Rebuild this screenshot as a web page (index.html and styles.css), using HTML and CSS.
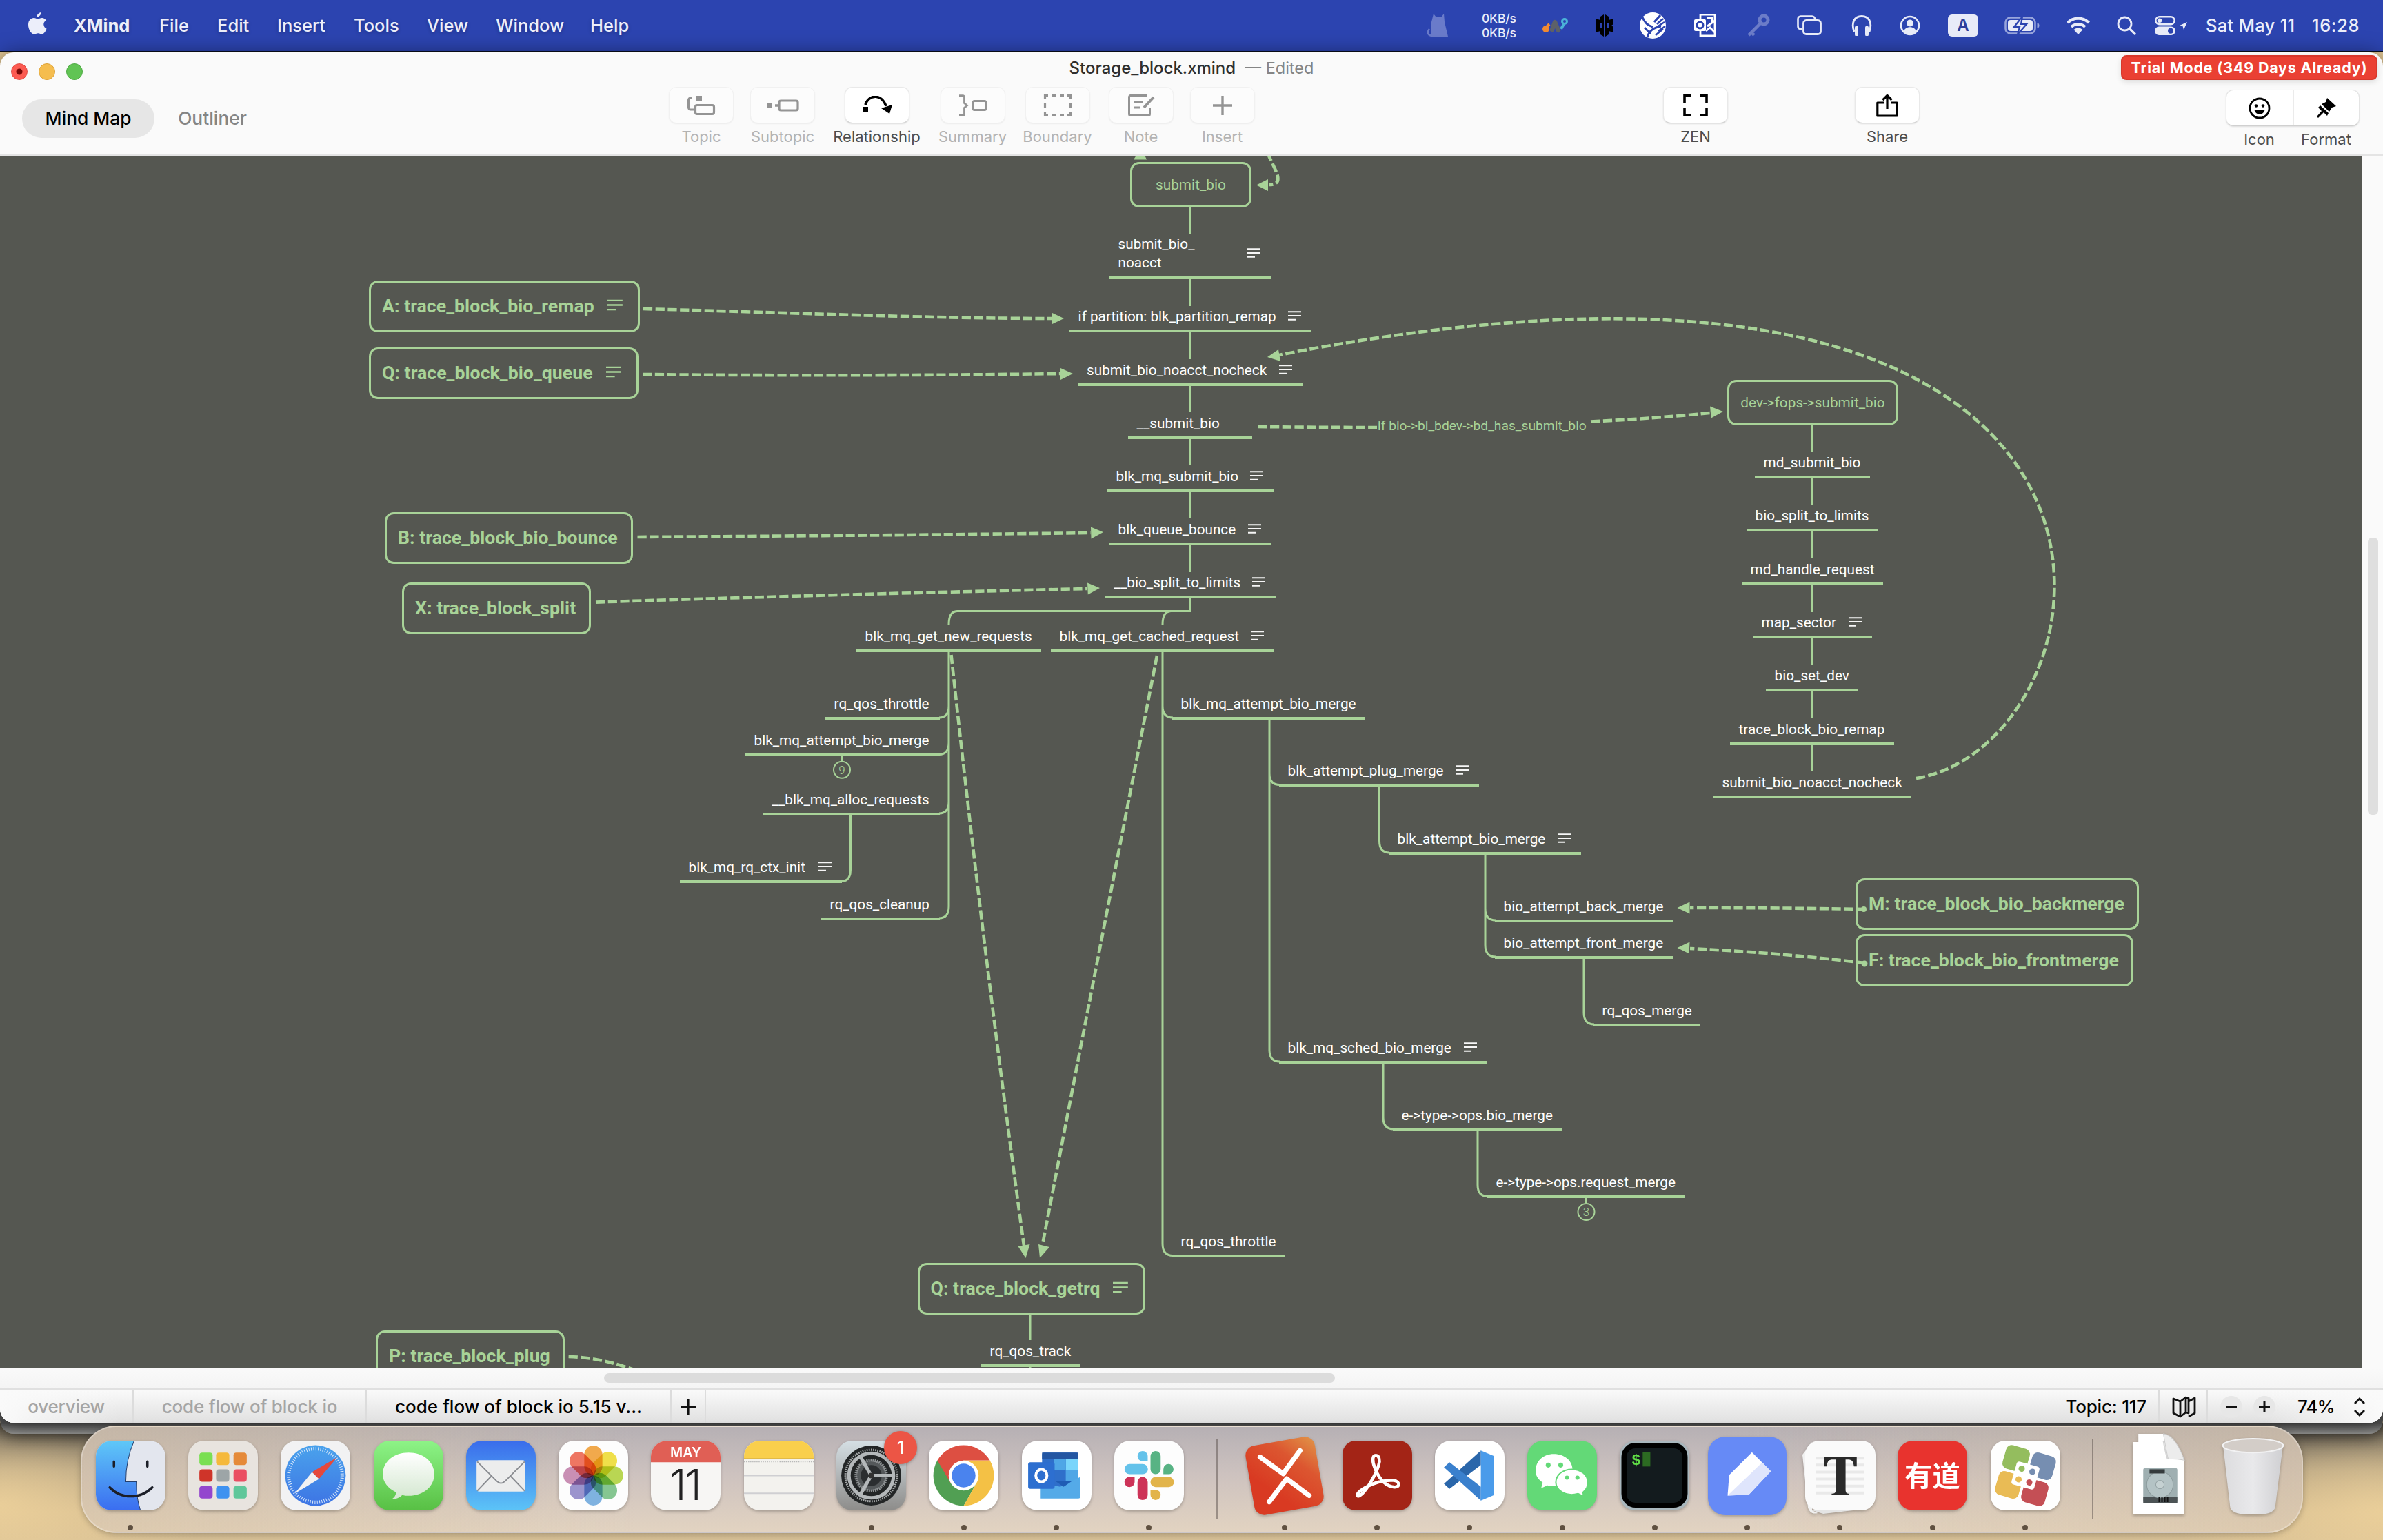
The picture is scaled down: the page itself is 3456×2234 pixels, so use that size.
FILE: index.html
```html
<!DOCTYPE html>
<html lang="en">
<head>
<meta charset="utf-8">
<title>Storage_block.xmind</title>
<link rel="stylesheet" href="styles.css">
</head>
<body>
<svg class="sprite" aria-hidden="true">
  <symbol id="note" viewBox="0 0 20 14"><path d="M0 1.2H19M0 7H19M0 12.8H11" fill="none" stroke="currentColor" stroke-width="2"/></symbol>
</svg>

<header class="menubar">
  <nav class="menus">
    <svg class="apple" width="28" height="33" viewBox="0 0 28 33"><path d="M19.5 0c.2 3-2.600 6.600-6 6.600C13.200 3.600 16.300.4 19.500 0zM26.800 11.400c-2.500 1.500-3.600 3.500-3.500 6 .1 3 1.700 5 4.200 6.100-1 3.300-3.700 8-6.700 8-2 0-2.900-1.300-5.600-1.300s-3.700 1.300-5.600 1.300C5.500 31.500 1 25 1 17.700 1 11.500 5 8 9.100 8c2.300 0 4.200 1.500 5.700 1.500S18.600 7.900 21 7.900c2.200 0 4.500 1.200 5.800 3.500z" fill="#eceefa"/></svg>
    <b>XMind</b><span>File</span><span>Edit</span><span>Insert</span><span>Tools</span><span>View</span><span>Window</span><span>Help</span>
  </nav>
  <div class="status">
    <svg width="34" height="34" viewBox="0 0 34 34" opacity=".38"><path d="M9 0l4 5h7l4-5 1 12 5 21H6V12z" fill="#cfd6f5"/><path d="M6 32C1 31-1 27 3 22" fill="none" stroke="#cfd6f5" stroke-width="2.500"/></svg>
    <div class="net"><span>0KB/s</span><span>0KB/s</span></div>
    <svg width="38" height="22" viewBox="0 0 38 22"><path d="M14 17L18 6l5 12" fill="none" stroke="#5d6168" stroke-width="6.500" stroke-linecap="round" stroke-linejoin="round"/><circle cx="5" cy="16" r="5" fill="#f08a33"/><path d="M6 13l4-4" stroke="#f08a33" stroke-width="4"/><circle cx="32" cy="5" r="3.500" fill="none" stroke="#4bb3d8" stroke-width="3"/><path d="M31 9l-4 7" stroke="#4bb3d8" stroke-width="4"/></svg>
    <svg width="28" height="32" viewBox="0 0 28 32"><path d="M13 0v32L8 29V24L1 26V6l7 2V3zM15 0l5 3v5l7-2v8l-3 2 3 2v8l-7-2v5l-5 3z" fill="#000"/><path d="M9 13v6M19 12v8" stroke="#2c44b0" stroke-width="2"/></svg>
    <svg width="40" height="38" viewBox="0 0 40 38"><circle cx="20" cy="19" r="19" fill="#fff"/><path d="M5 7c4 9 8 12 15 14M12 36c2-8 8-14 20-16M8 22l9 9M22 14L31 4M26 17l9-8" fill="none" stroke="#2c44b0" stroke-width="3"/><path d="M26 21l11-7M28 27l10-7M24 33l11-9" stroke="#2c44b0" stroke-width="2.500"/></svg>
    <svg width="34" height="34" viewBox="0 0 34 34"><path d="M10 1h21v31H10v-7M10 8V1" fill="none" stroke="#fff" stroke-width="2.800"/><rect x="1" y="8" width="17" height="17" rx="2" fill="#fff"/><circle cx="9.500" cy="16.500" r="4.500" fill="none" stroke="#2c44b0" stroke-width="3"/><path d="M20 18l11-8M18 25l6-5 8 8M20 6h7v7" fill="none" stroke="#fff" stroke-width="2.800"/></svg>
    <svg width="34" height="34" viewBox="0 0 34 34" opacity=".3"><circle cx="25" cy="9" r="6" fill="none" stroke="#fff" stroke-width="5"/><path d="M20 14L3 31m4-4l4 4" stroke="#fff" stroke-width="4.500" fill="none"/></svg>
    <svg width="36" height="30" viewBox="0 0 36 30"><path d="M8 20H5a4 4 0 0 1-3.500-4V5.500a4 4 0 0 1 4-4H22a4 4 0 0 1 4 4V6" fill="none" stroke="#e8ebf8" stroke-width="2.600"/><rect x="9.500" y="7.500" width="25" height="20" rx="4" fill="none" stroke="#e8ebf8" stroke-width="2.800"/></svg>
    <svg width="30" height="30" viewBox="0 0 30 30"><path d="M4 24C-1 10 5 1.500 15 1.500S31 10 26 24" fill="none" stroke="#e8ebf8" stroke-width="2.800"/><path d="M7.500 18v10M22.500 18v10" stroke="#e8ebf8" stroke-width="5" stroke-linecap="round"/></svg>
    <svg width="30" height="30" viewBox="0 0 30 30"><circle cx="15" cy="15" r="13" fill="none" stroke="#e8ebf8" stroke-width="2.600"/><circle cx="15" cy="11.500" r="5" fill="#e8ebf8"/><path d="M6 24c1-9 17-9 18 0-5 4.500-13 4.500-18 0z" fill="#e8ebf8"/></svg>
    <div class="ime">A</div>
    <svg width="52" height="26" viewBox="0 0 52 26"><rect x="1.500" y="1.500" width="43" height="23" rx="7" fill="none" stroke="#98a5dc" stroke-width="2.500"/><rect x="5" y="5" width="36" height="16" rx="4" fill="#e8ebf8"/><path d="M47.500 9c4 1 4 7 0 8z" fill="#98a5dc"/><path d="M26 0L14 15h8l-3 11 13-15h-8z" fill="#e8ebf8" stroke="#2c44b0" stroke-width="2.200"/></svg>
    <svg width="36" height="28" viewBox="0 0 36 28"><path d="M2.500 10a22 22 0 0 1 31 0M8 16a14.500 14.500 0 0 1 20 0" fill="none" stroke="#e8ebf8" stroke-width="4.200"/><path d="M11.500 20a9.500 9.500 0 0 1 13 0L18 27z" fill="#e8ebf8"/></svg>
    <svg width="28" height="28" viewBox="0 0 28 28"><circle cx="11.500" cy="11.500" r="9.500" fill="none" stroke="#e8ebf8" stroke-width="2.800"/><path d="M18.500 18.500l7.500 7.500" stroke="#e8ebf8" stroke-width="3.400" stroke-linecap="round"/></svg>
    <svg width="48" height="28" viewBox="0 0 48 28"><rect x="1.300" y="1.300" width="27.400" height="11" rx="5.500" fill="none" stroke="#e8ebf8" stroke-width="2.500"/><circle cx="7" cy="6.800" r="3.200" fill="#e8ebf8"/><rect x="0" y="15.500" width="30" height="12.500" rx="6.200" fill="#e8ebf8"/><circle cx="23" cy="21.700" r="4" fill="#2c44b0"/><path d="M47 9l-5 11-1.500-5-4.500-1z" fill="#e8ebf8"/></svg>
    <span class="date">Sat May 11</span><span class="time">16:28</span>
  </div>
</header>

<main class="window">
  <div class="titlebar">
    <div class="lights"><i class="close"></i><i class="min"></i><i class="max"></i></div>
    <h1>Storage_block.xmind <small>— Edited</small></h1>
    <div class="trial">Trial Mode (349 Days Already)</div>
  </div>
  <div class="toolbar">
    <div class="modes"><span class="mode on">Mind Map</span><span class="mode">Outliner</span></div>
    <div class="tool off"><div class="btn"><svg width="42" height="30" viewBox="0 0 42 30"><path d="M8 4H5.500a3 3 0 0 0-3 3v11a3 3 0 0 0 3 3H11" fill="none" stroke="currentColor" stroke-width="3"/><rect x="13" y="1" width="9" height="7" fill="currentColor"/><rect x="12.500" y="14.500" width="27" height="13" rx="2.500" fill="none" stroke="currentColor" stroke-width="3.200"/></svg></div><span>Topic</span></div>
    <div class="tool off"><div class="btn"><svg width="48" height="20" viewBox="0 0 48 20"><rect x="1" y="6" width="8" height="8" fill="currentColor"/><path d="M13 10h5" stroke="currentColor" stroke-width="3.500"/><rect x="19" y="3" width="27" height="14" rx="2.500" fill="none" stroke="currentColor" stroke-width="3.200"/></svg></div><span>Subtopic</span></div>
    <div class="tool"><div class="btn"><svg width="44" height="28" viewBox="0 0 44 28"><path d="M5 13C9-2 29-4 35 15" fill="none" stroke="#000" stroke-width="3.600"/><rect x="1" y="16" width="8" height="8" fill="#000"/><path d="M28 18l16-5-4 13z" fill="#000"/></svg></div><span>Relationship</span></div>
    <div class="tool off"><div class="btn"><svg width="42" height="32" viewBox="0 0 42 32"><path d="M1 1.600h5.500a2 2 0 0 1 2 2v9l4 3.400-4 3.400v9a2 2 0 0 1-2 2H1" fill="none" stroke="currentColor" stroke-width="2.800"/><rect x="21" y="9.500" width="19" height="13" rx="2.500" fill="none" stroke="currentColor" stroke-width="3.200"/></svg></div><span>Summary</span></div>
    <div class="tool off"><div class="btn"><svg width="42" height="32" viewBox="0 0 42 32"><path d="M2.500 7V1.600H7M13 1.600h6M24 1.600h6M35 1.600h4.500V7M39.500 12v8M39.500 25v5.400H35M30 30.400h-6M19 30.400h-6M7 30.400H2.500V25M2.500 20v-8" fill="none" stroke="currentColor" stroke-width="3.200"/></svg></div><span>Boundary</span></div>
    <div class="tool off"><div class="btn"><svg width="40" height="34" viewBox="0 0 40 34"><path d="M29 2.600H4.500a2 2 0 0 0-2 2v25a2 2 0 0 0 2 2h26a2 2 0 0 0 2-2V21M9 12h14M9 20h9" fill="none" stroke="currentColor" stroke-width="3"/><path d="M38 5L24 20" stroke="currentColor" stroke-width="4"/></svg></div><span>Note</span></div>
    <div class="tool off"><div class="btn"><svg width="30" height="28" viewBox="0 0 30 28"><path d="M15 0v28M1 14h28" stroke="currentColor" stroke-width="3.400"/></svg></div><span>Insert</span></div>
    <i></i>
    <div class="tool"><div class="btn"><svg width="36" height="32" viewBox="0 0 36 32"><path d="M12 1.800H2V12M24 1.800h10V12M34 20v10.200H24M12 30.200H2V20" fill="none" stroke="#000" stroke-width="3.600"/></svg></div><span>ZEN</span></div>
    <i></i>
    <div class="tool"><div class="btn"><svg width="34" height="34" viewBox="0 0 34 34"><path d="M12 13H2.800v19h28.400V13H22M17 22V4M10.500 9L17 2.500 23.500 9" fill="none" stroke="#000" stroke-width="3.200" stroke-linejoin="round"/></svg></div><span>Share</span></div>
    <i></i>
    <div class="panels">
      <div class="seg">
        <div><svg width="32" height="32" viewBox="0 0 32 32"><circle cx="16" cy="16" r="14" fill="none" stroke="#000" stroke-width="2.800"/><circle cx="11" cy="12.500" r="2.200"/><circle cx="21" cy="12.500" r="2.200"/><path d="M8.500 18h15c-1 9-14 9-15 0z"/></svg></div>
        <div><svg width="32" height="32" viewBox="0 0 32 32"><path d="M17 1l13 12-6 2-4 6L9 10l6-3zM7 12l12 11-2 4-5-5-8 8-2-2 7-8-5-5z"/></svg></div>
      </div>
      <div class="seglabels"><span>Icon</span><span>Format</span></div>
    </div>
  </div>

  <div class="workspace">
    <section class="canvas">
      <svg class="wires" width="3426" height="1758" viewBox="0 226 3426 1758">
        <g class="branch">
          <path d="M1726 301V340M1726 403V444M1726 480V521M1726 558V598M1726 635V675M1726 712V752M1726 789V830M1726 867V886.500H1388Q1376 887 1376 906M1726 886.500H1698Q1686 887 1686 906"/>
          <path d="M1376 944V1024Q1376 1041 1362 1041M1376 1077Q1376 1094.500 1362 1094.500M1376 1163Q1376 1180 1362 1180M1376 1000V1315Q1376 1332 1362 1332M1233.500 1181V1262Q1233.500 1278.500 1220 1278.500M1221 1096V1104"/>
          <path d="M1686 944V1024Q1686 1041 1701 1041M1686 1000V1804Q1686 1821.500 1701 1821.500M1841 1042V1122Q1841 1138.500 1856 1138.500M1841 1100V1523Q1841 1540 1856 1540M2000.500 1140V1220Q2000.500 1237 2015 1237M2154 1238V1318Q2154 1335 2169 1335M2154 1300V1371Q2154 1388 2169 1388M2297 1389V1469Q2297 1486 2312 1486M2006 1541V1621Q2006 1638 2021 1638M2143 1639V1719Q2143 1735.500 2158 1735.500M2300.500 1737V1745.500"/>
          <path d="M2628 617V656M2628 692V733M2628 770V810M2628 847V888M2628 924V965M2628 1002V1042M2628 1079V1119M1494 1906V1944M1494 1981V1990"/>
          <circle cx="1221" cy="1116.700" r="12"/><circle cx="2300.500" cy="1758" r="12"/>
        </g>
        <g class="relation">
          <path d="M933 448C1130 453 1340 462 1526 462"/>
          <path d="M932 543Q1240 546 1538 542"/>
          <path d="M924.500 779Q1260 777 1582 773"/>
          <path d="M864 873.600Q1220 862 1577 854"/>
          <path d="M1824 619Q1920 620 1997 620M2307 611.500Q2400 607 2480 599"/>
          <path d="M2779 1129C3080 1080 3222 248 1855 515"/>
          <path d="M1838 221C1848 246 1866 268 1840 268"/>
          <path d="M1379.500 950Q1426 1379 1485 1807M1678 951Q1594 1379 1512 1805"/>
          <path d="M2705 1319Q2580 1317 2451 1317M2705 1397Q2580 1382 2451 1376M824.600 1968C865 1969 895 1978 940 1994"/>
        </g>
        <g class="head">
          <path d="M1543 462l-18-8.500v17zM1556 542l-18-8v17zM1600 772l-18-7.500.5 17zM1595 853l-18-7.500.8 17zM2499 597l-19-7.500 1.600 17zM1838 518l16-11 3 17zM1822 268.500l17-8.500v17zM1487.500 1825l-11-17 17-3zM1508 1825l-2-20 16 4zM2432.500 1317l18-8.500v17zM2432.500 1375l18-8.500-.8 17zM1644 231.500h19l-8-17z"/>
          <circle cx="2703" cy="1319" r="4"/><circle cx="2704" cy="1398" r="4.500"/>
        </g>
      </svg>

      <div class="box plain" style="--x:1639;--y:235;--w:176;--h:66">submit_bio</div>
      <div class="box plain" style="--x:2505;--y:551;--w:248;--h:66">dev-&gt;fops-&gt;submit_bio</div>
      <div class="box" style="--x:535;--y:406.500;--w:392.500;--h:75.500">A: trace_block_bio_remap<svg><use href="#note"/></svg></div>
      <div class="box" style="--x:535;--y:503.500;--w:391;--h:75.500">Q: trace_block_bio_queue<svg><use href="#note"/></svg></div>
      <div class="box" style="--x:558;--y:742.500;--w:360;--h:75.500">B: trace_block_bio_bounce</div>
      <div class="box" style="--x:583;--y:844.500;--w:274;--h:75.500">X: trace_block_split</div>
      <div class="box" style="--x:2691;--y:1273.500;--w:411;--h:75.500">M: trace_block_bio_backmerge</div>
      <div class="box" style="--x:2691;--y:1355;--w:403;--h:75.500">F: trace_block_bio_frontmerge</div>
      <div class="box" style="--x:1330.500;--y:1831.500;--w:330;--h:75.500">Q: trace_block_getrq<svg><use href="#note"/></svg></div>
      <div class="box" style="--x:545;--y:1929.500;--w:274;--h:75.500">P: trace_block_plug</div>

      <div class="topic two" style="--x:1609;--y:402;--w:234"><span>submit_bio_<br>noacct</span><svg><use href="#note"/></svg></div>
      <div class="topic" style="--x:1551;--y:479.500;--w:351">if partition: blk_partition_remap<svg><use href="#note"/></svg></div>
      <div class="topic" style="--x:1563.500;--y:557;--w:325.500">submit_bio_noacct_nocheck<svg><use href="#note"/></svg></div>
      <div class="topic" style="--x:1636;--y:634;--w:180">__submit_bio</div>
      <div class="topic" style="--x:1606;--y:711;--w:241">blk_mq_submit_bio<svg><use href="#note"/></svg></div>
      <div class="topic" style="--x:1609;--y:788;--w:235">blk_queue_bounce<svg><use href="#note"/></svg></div>
      <div class="topic" style="--x:1603;--y:865.500;--w:247">__bio_split_to_limits<svg><use href="#note"/></svg></div>
      <div class="topic" style="--x:1242;--y:943;--w:268">blk_mq_get_new_requests</div>
      <div class="topic" style="--x:1524;--y:943;--w:324">blk_mq_get_cached_request<svg><use href="#note"/></svg></div>

      <div class="topic" style="--x:1197;--y:1041;--w:166">rq_qos_throttle</div>
      <div class="topic" style="--x:1081;--y:1094.500;--w:282">blk_mq_attempt_bio_merge</div>
      <div class="topic" style="--x:1107;--y:1180;--w:256">__blk_mq_alloc_requests</div>
      <div class="topic" style="--x:986;--y:1278.500;--w:235">blk_mq_rq_ctx_init<svg><use href="#note"/></svg></div>
      <div class="topic" style="--x:1191;--y:1332;--w:172">rq_qos_cleanup</div>
      <div class="count" style="--x:1221;--y:1116.700">9</div>

      <div class="topic" style="--x:1700;--y:1041;--w:280">blk_mq_attempt_bio_merge</div>
      <div class="topic" style="--x:1855;--y:1138.500;--w:290">blk_attempt_plug_merge<svg><use href="#note"/></svg></div>
      <div class="topic" style="--x:2014;--y:1237;--w:279">blk_attempt_bio_merge<svg><use href="#note"/></svg></div>
      <div class="topic" style="--x:2168;--y:1335;--w:258">bio_attempt_back_merge</div>
      <div class="topic" style="--x:2168;--y:1388;--w:258">bio_attempt_front_merge</div>
      <div class="topic" style="--x:2311;--y:1486;--w:155">rq_qos_merge</div>
      <div class="topic" style="--x:1855;--y:1540;--w:302">blk_mq_sched_bio_merge<svg><use href="#note"/></svg></div>
      <div class="topic" style="--x:2020;--y:1638;--w:246">e-&gt;type-&gt;ops.bio_merge</div>
      <div class="topic" style="--x:2157;--y:1735.500;--w:287">e-&gt;type-&gt;ops.request_merge</div>
      <div class="topic" style="--x:1700;--y:1821.500;--w:164">rq_qos_throttle</div>
      <div class="count" style="--x:2300.500;--y:1758">3</div>

      <div class="topic" style="--x:2545;--y:691.500;--w:167">md_submit_bio</div>
      <div class="topic" style="--x:2533;--y:768.500;--w:191">bio_split_to_limits</div>
      <div class="topic" style="--x:2526;--y:846;--w:205">md_handle_request</div>
      <div class="topic" style="--x:2542;--y:923;--w:173">map_sector<svg><use href="#note"/></svg></div>
      <div class="topic" style="--x:2561;--y:1000.500;--w:134">bio_set_dev</div>
      <div class="topic" style="--x:2509;--y:1078;--w:238">trace_block_bio_remap</div>
      <div class="topic" style="--x:2485;--y:1155;--w:287">submit_bio_noacct_nocheck</div>
      <div class="topic" style="--x:1423;--y:1980;--w:143">rq_qos_track</div>
      <div class="caption">if bio-&gt;bi_bdev-&gt;bd_has_submit_bio</div>
    </section>
    <div class="vscroll"><i></i></div>
  </div>
  <div class="hscroll"><i></i></div>
  <footer class="tabs">
    <span class="tab">overview</span><span class="tab">code flow of block io</span><span class="tab on">code flow of block io 5.15 v...</span>
    <span class="add"><svg width="24" height="24" viewBox="0 0 24 24"><path d="M12 1v22M1 12h22" stroke="#111" stroke-width="3.200"/></svg></span>
    <span class="info">Topic: 117</span>
    <span class="mapicon"><svg width="36" height="32" viewBox="0 0 36 32"><path d="M2 4l10 4V30L2 25zM12 8l8-6v22l-8 6M20 2l4 1v22l-4-1M24 8l9-5v22l-9 5" fill="none" stroke="#111" stroke-width="2.800" stroke-linejoin="round"/></svg></span>
    <span class="zoom"><i><svg width="16" height="16" viewBox="0 0 16 16"><path d="M0 8h16" stroke="#111" stroke-width="3"/></svg></i><i><svg width="16" height="16" viewBox="0 0 16 16"><path d="M0 8h16M8 0v16" stroke="#111" stroke-width="3"/></svg></i><b>74%</b><svg width="20" height="28" viewBox="0 0 20 28"><path d="M3 9l7-7 7 7M3 19l7 7 7-7" fill="none" stroke="#111" stroke-width="2.800"/></svg></span>
  </footer>
</main>

<div class="desktop">
  <div class="behind"></div>
  <div class="dock">
    <div class="app run"><svg viewBox="0 0 100 100"><defs><linearGradient id="fb" x2="0" y2="1"><stop stop-color="#5fc8f8"/><stop offset="1" stop-color="#3a6df0"/></linearGradient><clipPath id="rr"><rect width="100" height="100" rx="23"/></clipPath></defs><g clip-path="url(#rr)"><rect width="100" height="100" fill="#e3e6ee"/><path d="M0 0h55C46 20 43 42 43 59h15c0 16 2 29 6 41H0z" fill="url(#fb)"/><path d="M55 0C46 20 43 42 43 59h15c0 16 2 29 6 41" fill="none" stroke="#26406e" stroke-width="1"/></g><path d="M26 30v7M74 30v7M20 67c16 17 44 17 61 0" fill="none" stroke="#1c1f28" stroke-width="3.500" stroke-linecap="round"/></svg></div>
    <div class="app"><svg viewBox="0 0 100 100"><rect width="100" height="100" rx="23" fill="#e8e4df"/><g><rect x="16" y="17" width="19" height="18" rx="4" fill="#7adf52"/><rect x="40" y="17" width="19" height="18" rx="4" fill="#f5b93c"/><rect x="65" y="17" width="19" height="18" rx="4" fill="#e58a39"/><rect x="16" y="41" width="19" height="18" rx="4" fill="#cf3429"/><rect x="40" y="41" width="19" height="18" rx="4" fill="#9da5a7"/><rect x="65" y="41" width="19" height="18" rx="4" fill="#ea4e62"/><rect x="16" y="65" width="19" height="18" rx="4" fill="#9346ce"/><rect x="40" y="65" width="19" height="18" rx="4" fill="#3f92f0"/><rect x="65" y="65" width="19" height="18" rx="4" fill="#5fc79a"/></g></svg></div>
    <div class="app"><svg viewBox="0 0 100 100"><defs><linearGradient id="sf" x2="0" y2="1"><stop stop-color="#4aa2ec"/><stop offset="1" stop-color="#3d74e4"/></linearGradient></defs><rect width="100" height="100" rx="23" fill="#f2f2f3"/><circle cx="50" cy="50" r="43.500" fill="url(#sf)"/><circle cx="50" cy="50" r="38.500" fill="none" stroke="#d9e8fa" stroke-width="5" stroke-dasharray="1 2.360"/><path d="M81 24L55 55 45 45z" fill="#e5483c"/><path d="M20 76l25-31 10 10z" fill="#f1f1f3"/></svg></div>
    <div class="app"><svg viewBox="0 0 100 100"><defs><linearGradient id="ms" x2="0" y2="1"><stop stop-color="#8df387"/><stop offset="1" stop-color="#58c044"/></linearGradient><linearGradient id="bu" x2="0" y2="1"><stop stop-color="#fff"/><stop offset="1" stop-color="#d3e7cf"/></linearGradient></defs><rect width="100" height="100" rx="23" fill="url(#ms)"/><path d="M50 17c21 0 37 13 37 31S71 79 50 79c-3 0-6 0-9-1-4 4-9 6-15 6 4-3 6-6 6-10C20 68 13 59 13 48c0-18 16-31 37-31z" fill="url(#bu)"/></svg></div>
    <div class="app"><svg viewBox="0 0 100 100"><defs><linearGradient id="ml" x2="0" y2="1"><stop stop-color="#3a6ceb"/><stop offset="1" stop-color="#5cc4f7"/></linearGradient></defs><rect width="100" height="100" rx="23" fill="url(#ml)"/><rect x="15" y="28" width="70" height="45" rx="4" fill="#eceded"/><path d="M16 72l21-22M84 72L63 50M16 30l28 28c4 4 8 4 12 0l28-28" fill="none" stroke="#888b90" stroke-width="1.800"/></svg></div>
    <div class="app"><svg viewBox="0 0 100 100"><rect width="100" height="100" rx="23" fill="#fdfdfd"/><g class="petals"><rect x="37" y="7" width="26" height="43" rx="13" fill="#f2a33c"/><rect x="37" y="7" width="26" height="43" rx="13" fill="#f0df3a" transform="rotate(45 50 50)"/><rect x="37" y="7" width="26" height="43" rx="13" fill="#b5d544" transform="rotate(90 50 50)"/><rect x="37" y="7" width="26" height="43" rx="13" fill="#7cc489" transform="rotate(135 50 50)"/><rect x="37" y="7" width="26" height="43" rx="13" fill="#75aee0" transform="rotate(180 50 50)"/><rect x="37" y="7" width="26" height="43" rx="13" fill="#948ccb" transform="rotate(225 50 50)"/><rect x="37" y="7" width="26" height="43" rx="13" fill="#c786b0" transform="rotate(270 50 50)"/><rect x="37" y="7" width="26" height="43" rx="13" fill="#ef6b57" transform="rotate(315 50 50)"/></g></svg></div>
    <div class="app"><svg viewBox="0 0 100 100"><rect width="100" height="100" rx="23" fill="#f7f6f4"/><path d="M0 31V23A23 23 0 0 1 23 0H77a23 23 0 0 1 23 23v8z" fill="#e05f55"/><text x="50" y="24" class="cal-m">MAY</text><text x="49" y="85" class="cal-d">11</text></svg></div>
    <div class="app"><svg viewBox="0 0 100 100"><rect width="100" height="100" rx="23" fill="#f3f2ee"/><path d="M0 26V23A23 23 0 0 1 23 0H77a23 23 0 0 1 23 23v3z" fill="#f9cf4c"/><path d="M0 26h100" stroke="#c9a545" stroke-width="1.500"/><path d="M0 30h100" stroke="#b9b9b9" stroke-width="2" stroke-dasharray="1.500 1.500"/><path d="M0 50h100M0 75.500h100" stroke="#cfcfd2" stroke-width="1.800"/></svg></div>
    <div class="app run"><svg viewBox="0 0 100 100"><defs><linearGradient id="st" x2="0" y2="1"><stop stop-color="#d5dfe4"/><stop offset="1" stop-color="#8d8c8a"/></linearGradient></defs><rect width="100" height="100" rx="23" fill="url(#st)"/><circle cx="50" cy="50" r="43" fill="#222526"/><circle cx="50" cy="50" r="37" fill="none" stroke="#a5a8a9" stroke-width="3" stroke-dasharray="1.600 1.500"/><circle cx="50" cy="50" r="32" fill="none" stroke="#b4b8ba" stroke-width="5"/><circle cx="50" cy="50" r="22" fill="#54585a" stroke="#8d9193" stroke-width="4" stroke-dasharray="2 1"/><circle cx="50" cy="50" r="15" fill="#2b2e30"/><path d="M50 50h32M50 50L34 22M50 50L34 78" stroke="#b4b8ba" stroke-width="5"/><circle cx="50" cy="50" r="4" fill="#333"/></svg><em>1</em></div>
    <div class="app run"><svg viewBox="0 0 100 100"><rect width="100" height="100" rx="23" fill="#fff"/><path d="M12.300 28.300A43.500 43.500 0 0 0 50 93.500L68.600 60.700 50 50z" fill="#519f53"/><path d="M87.700 28.300A43.500 43.500 0 0 1 50 93.500L68.600 60.700 50 50V28.300z" fill="#f4c145"/><path d="M12.300 28.300A43.500 43.500 0 0 1 87.700 28.300H50V50L31.200 60.700z" fill="#dd4f42"/><circle cx="50" cy="50" r="21.500" fill="#fff"/><circle cx="50" cy="50" r="17" fill="#4a83ee"/></svg></div>
    <div class="app run"><svg viewBox="0 0 100 100"><rect width="100" height="100" rx="23" fill="#fff"/><rect x="29" y="17" width="52" height="63" rx="3" fill="#2f6fca"/><path d="M29 17h52v9H29z" fill="#2456a2"/><path d="M63 26h18v16H63z" fill="#7ad5fb"/><path d="M46 26h17v16H46zM63 42h18v16H63z" fill="#4fa6e6"/><path d="M27 60l28 6 29-14v28a3 3 0 0 1-3 3H27z" fill="#54aae8"/><path d="M48 58h24L60 66z" fill="#1f5cb4"/><rect x="9" y="31" width="38" height="38" rx="3" fill="#2d6fd0"/><ellipse cx="28" cy="50" rx="8" ry="9" fill="none" stroke="#fff" stroke-width="4"/></svg></div>
    <div class="app run"><svg viewBox="0 0 100 100"><rect width="100" height="100" rx="23" fill="#fdfdfd"/><path d="M48 29.500H40A7.300 7.300 0 1 1 48 22.200zM22 33.500h19a7.300 7.300 0 0 1 0 14.600H22a7.300 7.300 0 0 1 0-14.600z" fill="#64c2ea"/><path d="M52 22.200a7.300 7.300 0 0 1 14.600 0v18.600a7.300 7.300 0 0 1-14.600 0zM70.500 48V41a7.300 7.300 0 1 1 7.300 7.100z" fill="#58b384"/><path d="M29.200 52v7.300A7.300 7.300 0 1 1 22 52zM33.400 59.300a7.300 7.300 0 0 1 14.600 0v18.600a7.300 7.300 0 0 1-14.600 0z" fill="#cd3358"/><path d="M59.300 52h19a7.300 7.300 0 0 1 0 14.600h-19a7.300 7.300 0 0 1 0-14.600zM52 70.500h7.300A7.300 7.300 0 1 1 52 77.800z" fill="#e2b44b"/></svg></div>
    <i class="rule"></i>
    <div class="app run tilt"><svg viewBox="-8 -8 116 116"><defs><linearGradient id="xm" x1="1" y1="0" x2=".3" y2=".7"><stop stop-color="#e19648"/><stop offset=".45" stop-color="#dc5630"/><stop offset="1" stop-color="#d93a22"/></linearGradient></defs><g transform="rotate(-10 50 50)"><rect width="100" height="100" rx="14" fill="url(#xm)"/></g><path d="M15 23l33 24L72 14M28 87l25-33 32 24" fill="none" stroke="#fff" stroke-width="7" stroke-linecap="round" stroke-linejoin="round"/></svg></div>
    <div class="app run"><svg viewBox="0 0 100 100"><rect width="100" height="100" rx="19" fill="#a32416"/><path d="M48 21c-6 0-5 9-2 17 5 14 14 26 25 28 12 3 13-8 2-9-14-1-30 4-40 10-13 7-14 14-9 12C32 76 51 45 53 30c0-6-2-9-5-9z" fill="none" stroke="#fff" stroke-width="4.500" stroke-linejoin="round"/></svg></div>
    <div class="app run"><svg viewBox="0 0 100 100"><rect width="100" height="100" rx="23" fill="#fff"/><path d="M66 14L13 62l8 7L66 35z" fill="#2a66aa"/><path d="M66 86L13 38l8-7 45 35z" fill="#3a80cd"/><path d="M66 14l19 8v56l-19 8z" fill="#4a9bea"/></svg></div>
    <div class="app run"><svg viewBox="0 0 100 100"><rect width="100" height="100" rx="23" fill="#63d977"/><path d="M38 19c16 0 27 10 27 23-14 0-25 9-24 23-4 1-8 0-12-1l-9 4 2-8C15 55 12 50 12 43c0-14 11-24 26-24z" fill="#fff"/><path d="M64 41c13 0 23 8 23 19 0 6-3 11-7 14l1 6-8-4c-18 5-32-5-32-16 0-11 10-19 23-19z" fill="#fff" stroke="#63d977" stroke-width="2"/><g fill="#63d977"><circle cx="30" cy="35" r="3.500"/><circle cx="48" cy="35" r="3.500"/><circle cx="57" cy="53" r="3"/><circle cx="72" cy="53" r="3"/></g></svg></div>
    <div class="app run"><svg viewBox="0 0 100 100"><rect width="100" height="100" rx="22" fill="#a9b7bd"/><rect x="2.500" y="3" width="95" height="93" rx="20" fill="#000"/><rect x="10" y="11" width="80" height="78" rx="12" fill="#131b1e"/><text x="17" y="35" class="term">$</text><path d="M33 16h11v21H33z" fill="#2c6a22"/></svg></div>
    <div class="app run big"><svg viewBox="0 0 100 100"><rect width="100" height="100" rx="22" fill="#668af6"/><path d="M56 20L80 44 52 74 25 75 27 49z" fill="#fff"/><path d="M80 44L52 74 25 75 69 33z" fill="#dfe5fc"/></svg></div>
    <div class="app run"><svg viewBox="0 0 100 100"><path d="M-4 20L10 2v98l8 4c-8 2-12-2-14-8z" fill="#f1f1f1"/><path d="M10 100l16 5 60-7z" fill="#e4e4e4"/><rect x="0" width="101" height="100" rx="20" fill="#fafafa"/><path d="M15 25h70M15 35h70M15 45h70M15 55h70M15 65h70M15 75h70" stroke="#e9e9e9" stroke-width="4"/><path d="M27 23h47v14h-4c-1-8-3-10-9-10h-3v43c0 5 2 6 5 6v2H38v-2c4 0 6-1 6-6V27h-4c-6 0-8 2-9 10h-4z" fill="#2a2a2a"/></svg></div>
    <div class="app run"><svg viewBox="0 0 100 100"><rect width="100" height="100" rx="22" fill="#e8332e"/><text x="50" y="65" class="cjk">有道</text></svg></div>
    <div class="app run"><svg viewBox="0 0 100 100"><rect width="100" height="100" rx="21" fill="#fefefe"/><g transform="rotate(16 50 50)"><rect x="13" y="13" width="35" height="35" rx="8" fill="#94bd5e"/><rect x="52" y="13" width="35" height="35" rx="8" fill="#768eb1"/><rect x="13" y="52" width="35" height="35" rx="8" fill="#e9bb55"/><rect x="52" y="52" width="35" height="35" rx="8" fill="#c44f55"/><rect x="33" y="33" width="34" height="34" rx="4" fill="#fff"/><circle cx="42" cy="42" r="4.500" fill="#94bd5e"/><circle cx="58" cy="42" r="4.500" fill="#768eb1"/><circle cx="42" cy="58" r="4.500" fill="#e9bb55"/><circle cx="58" cy="58" r="4.500" fill="#c44f55"/></g></svg></div>
    <i class="rule"></i>
    <div class="app"><svg viewBox="0 0 100 100"><path d="M18-10h36c10 0 22 14 30 38v78H10V2h8z" fill="#fff"/><path d="M54-10c2 12 5 30 7 36 6 0 15 0 23 2C78 10 66-10 54-10z" fill="#ececec" stroke="#ccc"/><path d="M54 0c2 12 4 20 6 26" fill="none" stroke="#d5d5d5" stroke-width="2"/><rect x="25" y="39" width="49" height="50" rx="3" fill="#9fafb1"/><path d="M25 81h49v8H25z" fill="#4c5355"/><circle cx="49" cy="63" r="19" fill="#b4c3c5" stroke="#8d9c9e"/><circle cx="49" cy="63" r="6" fill="#c5d1d2" stroke="#96a4a6"/><rect x="34" y="41" width="22" height="6" fill="#353b3d"/><path d="M48 81v7M52 81v7M56 81v7M60 81v7" stroke="#111" stroke-width="2"/></svg></div>
    <div class="app"><svg viewBox="0 0 100 100"><defs><linearGradient id="tr"><stop stop-color="#dcdcde"/><stop offset=".5" stop-color="#e9e9eb"/><stop offset="1" stop-color="#cfcfd2"/></linearGradient></defs><path d="M7 7l10 87c1 9 11 12 33 12s31-3 32-12L93 7z" fill="url(#tr)"/><ellipse cx="50" cy="7" rx="43.500" ry="10" fill="#d3cdc8" stroke="#f2f2f3" stroke-width="2"/></svg></div>
  </div>
</div>
</body>
</html>
```

FILE: styles.css
```css
* { box-sizing: border-box; }
body {
  margin: 0;
  width: 3456px;
  height: 2234px;
  overflow: hidden;
  display: flex;
  flex-direction: column;
  background: #e3c896;
  font-family: Inter, "Liberation Sans", sans-serif;
}
i, em { font-style: normal; }
.sprite { position: absolute; width: 0; height: 0; }

/* Menu bar */
.menubar {
  flex: none;
  height: 76px;
  display: flex;
  justify-content: space-between;
  background: #2c44b0;
  border-bottom: 2px solid #0c0f1c;
  color: #eceefa;
  font-size: 25.5px;
  font-weight: 500;
  line-height: 74px;
  white-space: nowrap;
}
.menus {
  display: grid;
  grid-template-columns: 67px 124px 84px 87px 111px 106px 100px 137px 60px;
  padding-left: 40px;
  text-shadow: 0 2px 5px rgba(0, 0, 40, .3);
}
.menus b { font-weight: 700; }
.apple { margin-top: 18px; }
.status {
  display: grid;
  grid-template-columns: 79px 88px 76px 64px 79px 77px 73px 79px 70px 70px 82px 89px 74px 55px 74px 154px 103px;
  align-items: center;
  justify-items: start;
}
.net { display: grid; font-size: 17.5px; line-height: 21px; letter-spacing: -.2px; }
.ime {
  width: 44px;
  height: 32px;
  border-radius: 6px;
  background: #e8ebf8;
  color: #2c3f9c;
  font-weight: 600;
  font-size: 24px;
  line-height: 32px;
  text-align: center;
}
.date { letter-spacing: .3px; }
.time { letter-spacing: .6px; }

/* Window */
.window {
  flex: none;
  position: relative;
  z-index: 1;
  height: 1988px;
  display: flex;
  flex-direction: column;
  background: #fafafa;
  border-radius: 20px;
  box-shadow: 0 4px 30px rgba(0, 0, 0, .55);
  overflow: hidden;
}
.titlebar {
  flex: none;
  height: 50px;
  display: grid;
  grid-template-columns: 1fr auto 1fr;
}
.lights { display: flex; gap: 16px; padding: 16px 0 0 16px; }
.lights i { width: 24px; height: 24px; border-radius: 50%; }
.close { background: radial-gradient(circle, #7a0a08 0 4px, #fc5b52 5px); border: 1px solid #df4840; }
.min { background: #f5bd4f; border: 1px solid #dca23a; }
.max { background: #61c454; border: 1px solid #4fa944; }
h1 {
  margin: 0;
  padding-top: 7px;
  font-size: 24px;
  line-height: 32px;
  font-weight: 500;
  color: #2f2f2f;
  height: 45px;
  white-space: nowrap;
}
h1 small { margin-left: 7px; font-size: 23.5px; font-weight: 400; color: #858585; }
.trial {
  justify-self: end;
  width: 372px;
  height: 36px;
  margin: 4px 8px 0 0;
  background: #ea4033;
  border: 2px solid #d8382c;
  border-radius: 8px;
  color: #fff;
  font-size: 21.500px;
  letter-spacing: .8px;
  line-height: 32px;
  font-weight: 700;
  display: flex;
  justify-content: center;
  white-space: nowrap;
  box-shadow: 0 3px 8px rgba(0, 0, 0, .12);
}
.toolbar {
  flex: none;
  height: 100px;
  display: grid;
  grid-template-columns: 958px 118px 118px 155px 123px 123px 119px 117px 569px 118px 160px 118px 432px 194px;
  border-bottom: 2px solid #e4e4e4;
}
.modes { display: flex; gap: 0; padding: 18px 0 0 32px; }
.mode {
  width: 192px;
  height: 56px;
  border-radius: 28px;
  color: #858585;
  font-size: 26.3px;
  line-height: 56px;
  font-weight: 500;
  text-align: center;
}
.mode + .mode { width: 168px; }
.mode.on { background: #e6e6e6; color: #000; }
.tool {
  display: flex;
  flex-direction: column;
  align-items: center;
  gap: 6px;
  color: #4d4d4d;
  font-size: 22px;
  line-height: 26px;
}
.tool.off { color: #b3b3b3; }
.btn {
  width: 94px;
  height: 53px;
  display: grid;
  place-items: center;
  background: #fff;
  border: 1px solid #e9e9e9;
  border-bottom-color: #d4d4d4;
  border-radius: 11px;
  box-shadow: 0 1px 2px rgba(0, 0, 0, .12);
}
.off .btn { background: #fcfcfc; border-color: #f1f1f1; color: #949494; box-shadow: 0 1px 2px rgba(0, 0, 0, .06); }
.panels { padding-top: 4px; color: #4d4d4d; font-size: 22px; line-height: 26px; }
.seg {
  height: 53px;
  display: grid;
  grid-template-columns: 1fr 1fr;
  background: #fff;
  border: 1px solid #e4e4e4;
  border-bottom-color: #d0d0d0;
  border-radius: 11px;
  box-shadow: 0 1px 2px rgba(0, 0, 0, .12);
}
.seg div { display: grid; place-items: center; }
.seg div + div { border-left: 2px solid #ebebeb; }
.seglabels { display: grid; grid-template-columns: 1fr 1fr; text-align: center; margin-top: 6px; }

/* Mind map canvas: free placement of topics */
.workspace { flex: none; height: 1758px; display: flex; }
.canvas {
  position: relative;
  width: 3426px;
  overflow: hidden;
  background: #555751;
  color: #fff;
  font-family: Roboto, "Liberation Sans", sans-serif;
}
.wires { position: absolute; left: 0; top: 0; }
.branch { fill: none; stroke: #a8d398; stroke-width: 3; }
.branch circle { stroke-width: 2; }
.relation { fill: none; stroke: #a8d398; stroke-width: 4.6; stroke-dasharray: 13.2 4.56; }
.head { fill: #a8d398; }
.box {
  position: absolute;
  left: calc(var(--x) * 1px);
  top: calc((var(--y) - 226) * 1px);
  width: calc(var(--w) * 1px);
  height: calc(var(--h) * 1px);
  display: flex;
  align-items: center;
  justify-content: space-between;
  padding: 0 21px 0 16px;
  border: 3px solid #a8d398;
  border-radius: 13px;
  color: #a8d398;
  font-size: 26.64px;
  letter-spacing: .04px;
  font-weight: 700;
  white-space: nowrap;
}
.box.plain { justify-content: center; padding: 0; font-size: 20.720px; font-weight: 400; }
.box svg { width: 23px; height: 17px; margin-bottom: 4px; }
.topic {
  position: absolute;
  left: calc(var(--x) * 1px);
  top: calc((var(--y) - 263.5) * 1px);
  width: calc(var(--w) * 1px);
  height: 40px;
  display: flex;
  align-items: flex-end;
  justify-content: space-between;
  padding: 0 14px 4.600px 12.600px;
  border-bottom: 4px solid #a8d398;
  font-size: 20.720px;
  line-height: 27px;
  white-space: nowrap;
}
.topic svg { width: 20px; height: 14px; margin-bottom: 8px; opacity: .95; }
.topic.two { height: 67px; top: calc((var(--y) - 290.5) * 1px); }
.topic.two span { margin-bottom: 1px; }
.topic.two svg { margin-bottom: 21.5px; }
.count {
  position: absolute;
  left: calc((var(--x) - 12) * 1px);
  top: calc((var(--y) - 238) * 1px);
  width: 24px;
  color: #a8d398;
  font-size: 17px;
  font-weight: 300;
  line-height: 24px;
  text-align: center;
}
.caption {
  position: absolute;
  left: 1998px;
  top: 379px;
  color: #a8d398;
  font-size: 19.240px;
  line-height: 26px;
  white-space: nowrap;
}
.vscroll { width: 30px; padding: 554px 7px 0 8px; background: #fafafa; }
.vscroll i { display: block; height: 402px; border-radius: 6px; background: #dfdfdf; }
.hscroll { flex: none; height: 32px; padding: 8px 0 0 876px; border-bottom: 2px solid #e0e0e0; background: linear-gradient(#fafafa, #f4f4f4); }
.hscroll i { display: block; width: 1060px; height: 14px; border-radius: 7px; background: #dcdcdc; }

/* Sheet tabs */
.tabs {
  flex: none;
  height: 48px;
  display: grid;
  grid-template-columns: 194px 338px 442px 50px 1fr 70px 254px;
  background: linear-gradient(90deg, #fafafa, rgba(250, 250, 250, 0) 5%, rgba(250, 250, 250, 0) 95%, #fafafa), linear-gradient(#fafafa, #e0e0e0);
  font-size: 26px;
  line-height: 49px;
  font-weight: 500;
  white-space: nowrap;
}
.tab { border-right: 2px solid #dcdcdc; color: #a5a5a5; text-align: center; letter-spacing: -.2px; }
.tab.on { color: #000; letter-spacing: 0; }
.add { display: grid; place-items: center; border-right: 2px solid #dcdcdc; }
.info { padding-right: 17px; border-right: 2px solid #dcdcdc; text-align: right; letter-spacing: -.2px; }
.mapicon { display: grid; place-items: center; padding-left: 4px; border-right: 2px solid #dcdcdc; }
.zoom { display: flex; align-items: center; padding-left: 18px; }
.zoom i { display: grid; place-items: center; width: 32px; height: 32px; margin-right: 16px; border-radius: 50%; background: #e7e7e7; }
.zoom b { width: 64px; margin: 0 16px; font-weight: 500; letter-spacing: -.8px; }

/* Desktop and dock */
.desktop {
  flex: none;
  height: 170px;
  padding: 4px 116px 0 117px;
  background:
    radial-gradient(ellipse 300px 150px at 0 120px, rgba(236, 208, 154, .9), rgba(236, 208, 154, 0)),
    radial-gradient(ellipse 300px 150px at 100% 130px, rgba(236, 208, 154, .9), rgba(236, 208, 154, 0)),
    linear-gradient(#3d3a36 0, #5f5a52 20px, #a8987c 70px, #d5bd92 130px, #d6bf95);
}
.behind {
  position: absolute;
  left: 0;
  top: 2040px;
  width: 3456px;
  height: 40px;
  border-radius: 0 0 20px 20px;
  background: linear-gradient(#555 24px, #969694);
  box-shadow: 0 4px 24px rgba(0, 0, 0, .5);
}
.dock {
  position: relative;
  z-index: 2;
  height: 156px;
  display: flex;
  padding: 20px 3px 0;
  border: 2px solid rgba(255, 255, 255, .28);
  border-radius: 52px;
  background: linear-gradient(90deg, rgba(214, 190, 150, .45), rgba(214, 190, 150, 0) 25%, rgba(214, 190, 150, 0) 75%, rgba(214, 190, 150, .45)), linear-gradient(#b6b0b4, #cdc2bf 45%, #e2d3c1);
  box-shadow: 0 2px 8px rgba(0, 0, 0, .25);
}
.app {
  position: relative;
  flex: none;
  width: 134.3px;
  display: flex;
  flex-direction: column;
  align-items: center;
}
.app > svg { width: 101px; height: 101px; overflow: visible; filter: drop-shadow(0 2px 2px rgba(0, 0, 0, .25)); }
.app.run::after { content: ""; width: 8px; height: 8px; margin-top: 21px; border-radius: 50%; background: #5f5040; }
.app.tilt > svg { width: 118px; height: 118px; margin: -8px 0 -9px; }
.app.big > svg { width: 114px; height: 114px; margin: -6px 0 -7px; }
.petals rect { mix-blend-mode: multiply; opacity: .92; }
.app em {
  position: absolute;
  left: 86px;
  top: -14px;
  width: 48px;
  height: 48px;
  border-radius: 50%;
  background: #ec5545;
  color: #fff;
  font-size: 26px;
  line-height: 48px;
  text-align: center;
  box-shadow: 0 1px 4px rgba(0, 0, 0, .3);
}
.rule { flex: none; width: 2px; height: 116px; margin: -2px 30px 0; background: rgba(90, 80, 75, .5); }
.cal-m { font: 600 19.5px Inter, sans-serif; fill: #fff; text-anchor: middle; }
.cal-d { font: 300 61px Inter, sans-serif; fill: #222; text-anchor: middle; letter-spacing: -2px; }
.term { font: 700 22px "Liberation Mono", monospace; fill: #5fdc46; }
.cjk { font: 700 40px "Noto Sans CJK SC", sans-serif; fill: #fff; text-anchor: middle; }
```
